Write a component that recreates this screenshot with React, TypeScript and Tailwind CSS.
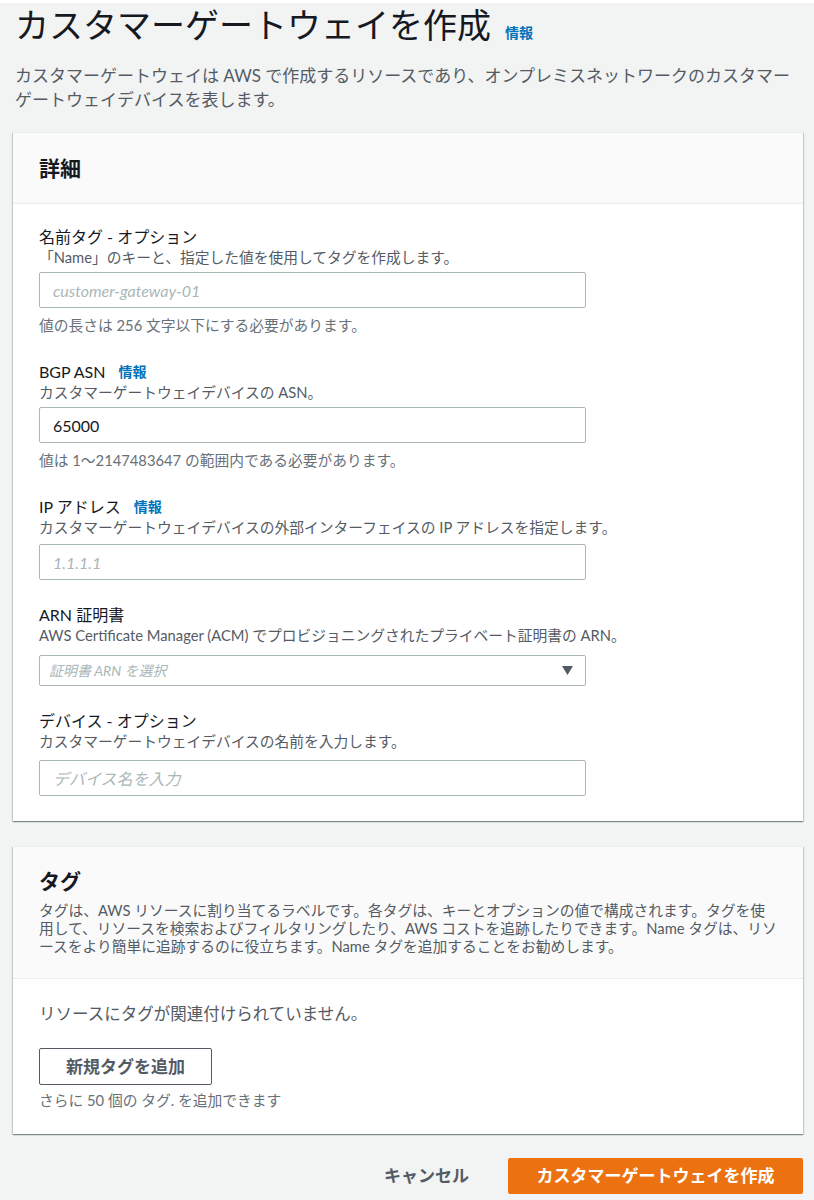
import type { ReactNode } from "react";

const cardShadow =
  "shadow-[0_1px_1px_0_rgba(0,28,36,0.3),1px_1px_1px_0_rgba(0,28,36,0.15),-1px_1px_1px_0_rgba(0,28,36,0.15)]";

const Info = () => (
  <span className="ml-[13px] text-[14px] font-bold leading-[22px] text-[#0073bb]">情報</span>
);

type FieldProps = {
  label: string;
  info?: boolean;
  desc: string;
  hint?: string;
  gap?: string;
  children: ReactNode;
};

const Field = ({ label, info, desc, hint, gap = "mt-2", children }: FieldProps) => (
  <div>
    <div className="flex items-center text-[16px] leading-[22px] text-[#16191f]">
      {label}
      {info && <Info />}
    </div>
    <div className="text-[14.75px] leading-[18px] text-[#545b64]">{desc}</div>
    <div className={gap}>{children}</div>
    {hint && (
      <div className="mb-[3px] mt-2 text-[14.75px] leading-[18px] text-[#687078]">{hint}</div>
    )}
  </div>
);

const TextInput = ({ placeholder, value }: { placeholder?: string; value?: string }) => (
  <input
    readOnly
    defaultValue={value}
    placeholder={placeholder}
    className="block h-[36px] w-[547px] rounded-[2px] border border-[#aab7b8] bg-white px-[13px] text-[16px] text-[#16191f] outline-none placeholder:italic placeholder:text-[#aab7b8]"
  />
);

export default function App() {
  return (
    <div className="min-h-[1200px] border-t-[3px] border-white bg-[#f2f3f3] pl-[13px] pr-[11px] font-['Lato','Noto_Sans_CJK_JP',sans-serif] text-[#16191f]">
      {/* page header */}
      <div className="mt-[2px] flex items-baseline pl-[2px]">
        <h1 className="text-[34px] font-normal leading-[40px] text-[#16191f]">カスタマーゲートウェイを作成</h1>
        <span className="ml-[14px] text-[14px] font-bold text-[#0073bb]">情報</span>
      </div>
      <p className="mt-[19px] pl-[2px] text-[17px] leading-[24px] text-[#545b64]">
        カスタマーゲートウェイは AWS で作成するリソースであり、オンプレミスネットワークのカスタマーゲートウェイデバイスを表します。
      </p>

      {/* details */}
      <section className={`mt-[20px] w-[790px] border-t border-[#eaeded] bg-white ${cardShadow}`}>
        <div className="border-b border-[#eaeded] bg-[#fafafa] px-[26px] py-[20px]">
          <h2 className="text-[21px] font-bold leading-[30px]">詳細</h2>
        </div>
        <div className="flex flex-col gap-6 px-[26px] pb-[25px] pt-[22px]">
          <Field
            label="名前タグ - オプション"
            desc="「Name」のキーと、指定した値を使用してタグを作成します。"
            hint="値の長さは 256 文字以下にする必要があります。"
            gap="mt-[6px]"
          >
            <TextInput placeholder="customer-gateway-01" />
          </Field>
          <Field
            label="BGP ASN"
            info
            desc="カスタマーゲートウェイデバイスの ASN。"
            hint="値は 1〜2147483647 の範囲内である必要があります。"
            gap="mt-[6px]"
          >
            <TextInput value="65000" />
          </Field>
          <Field
            label="IP アドレス"
            info
            desc="カスタマーゲートウェイデバイスの外部インターフェイスの IP アドレスを指定します。"
          >
            <TextInput placeholder="1.1.1.1" />
          </Field>
          <Field
            label="ARN 証明書"
            desc="AWS Certificate Manager (ACM) でプロビジョニングされたプライベート証明書の ARN。"
            gap="mt-[11px]"
          >
            <div className="flex h-[31px] w-[547px] items-center justify-between rounded-[2px] border border-[#aab7b8] bg-white pl-[9px] pr-[12px]">
              <span className="text-[14px] italic text-[#aab7b8]">証明書 ARN を選択</span>
              <svg width="11" height="9" viewBox="0 0 11 9">
                <path d="M0 0H11L5.5 9Z" fill="#545b64" />
              </svg>
            </div>
          </Field>
          <Field
            label="デバイス - オプション"
            desc="カスタマーゲートウェイデバイスの名前を入力します。"
            gap="mt-[10px]"
          >
            <TextInput placeholder="デバイス名を入力" />
          </Field>
        </div>
      </section>

      {/* tags */}
      <section className={`mt-[25px] w-[790px] border-t border-[#eaeded] bg-white ${cardShadow}`}>
        <div className="border-b border-[#eaeded] bg-[#fafafa] px-[26px] pb-[23px] pt-[19px]">
          <h2 className="text-[21px] font-bold leading-[30px]">タグ</h2>
          <p className="mt-[5px] whitespace-nowrap text-[14.75px] leading-[18px] text-[#545b64]">
            タグは、AWS リソースに割り当てるラベルです。各タグは、キーとオプションの値で構成されます。タグを使
            <br />
            用して、リソースを検索およびフィルタリングしたり、AWS コストを追跡したりできます。Name タグは、リソ
            <br />
            ースをより簡単に追跡するのに役立ちます。Name タグを追加することをお勧めします。
          </p>
        </div>
        <div className="px-[26px] pb-[25px] pt-[24px]">
          <p className="text-[16.5px] leading-[22px] text-[#545b64]">リソースにタグが関連付けられていません。</p>
          <button className="mt-[23px] h-[37px] w-[173px] rounded-[2px] border border-[#545b64] bg-white text-[17px] font-bold text-[#545b64]">
            新規タグを追加
          </button>
          <p className="mt-[6px] text-[14.75px] leading-[18px] text-[#687078]">さらに 50 個の タグ. を追加できます</p>
        </div>
      </section>

      {/* footer actions */}
      <div className="mt-[24px] flex w-[790px] items-center justify-end">
        <button className="mr-[39px] text-[17px] font-bold text-[#545b64]">キャンセル</button>
        <button className="h-[36px] w-[295px] rounded-[2px] bg-[#ec7211] text-[17px] font-bold text-white">
          カスタマーゲートウェイを作成
        </button>
      </div>
    </div>
  );
}
